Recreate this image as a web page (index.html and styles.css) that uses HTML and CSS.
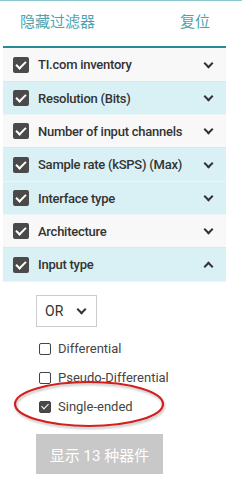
FILE: index.html
```html
<!DOCTYPE html>
<html lang="zh">
<head>
  <meta charset="UTF-8">
  <title>Filters</title>
  <link rel="stylesheet" href="styles.css">
</head>
<body>
  <div class="panel">
    <div class="head">
      <span class="link">隐藏过滤器</span>
      <span class="link reset">复位</span>
    </div>

    <div class="filters">
      <div class="row gray"><span class="box"></span><span class="name">TI.com inventory</span><span class="chev"></span></div>
      <div class="row blue"><span class="box"></span><span class="name">Resolution (Bits)</span><span class="chev"></span></div>
      <div class="row gray"><span class="box"></span><span class="name">Number of input channels</span><span class="chev"></span></div>
      <div class="row blue"><span class="box"></span><span class="name">Sample rate (kSPS) (Max)</span><span class="chev"></span></div>
      <div class="row blue"><span class="box"></span><span class="name">Interface type</span><span class="chev"></span></div>
      <div class="row gray"><span class="box"></span><span class="name">Architecture</span><span class="chev"></span></div>
      <div class="row blue"><span class="box"></span><span class="name">Input type</span><span class="chev up"></span></div>
    </div>

    <div class="options">
      <div class="select">OR<span class="chev small"></span></div>
      <label class="opt"><span class="tick"></span>Differential</label>
      <label class="opt"><span class="tick"></span>Pseudo-Differential</label>
      <label class="opt marked"><span class="tick on"></span>Single-ended
        <svg class="ring" width="156" height="52" viewBox="0 0 156 52">
          <ellipse cx="78" cy="26" rx="74" ry="22" fill="none" stroke="#d41f1f" stroke-width="2.2"/>
        </svg>
      </label>
      <button class="show">显示 13 种器件</button>
    </div>
  </div>
</body>
</html>
```

FILE: styles.css
```css
body {
  margin: 0;
  font-family: Roboto, "Noto Sans CJK SC", sans-serif;
  color: #333;
  background: #fff;
  border-top: 1px solid #8cc7cf;
}
.panel {
  width: 223px;
  margin-left: 3px;
}
.head {
  display: flex;
  justify-content: space-between;
  padding: 11px 16px 0 17px;
  height: 34px;
  border-bottom: 2px solid #2a8a98;
}
.link {
  font-size: 15px;
  color: #4ea3b2;
  line-height: 20px;
}
.row {
  display: flex;
  align-items: center;
  height: 32px;
  padding: 0 13px 0 10px;
  border-bottom: 1px solid #e4e4e4;
}
.row:nth-child(3n+1) {
  height: 33px;
}
.row.gray {
  background: #f8f8f8;
}
.row.blue {
  background: #d9f1f5;
  border-bottom-color: #e9f6f8;
}
.box {
  width: 16px;
  height: 16px;
  border-radius: 2px;
  background: #4a4a4a;
  position: relative;
  flex: none;
}
.box::after, .tick.on::after {
  content: "";
  position: absolute;
  left: 5px;
  top: 2px;
  width: 4px;
  height: 8px;
  border: solid #fff;
  border-width: 0 2px 2px 0;
  transform: rotate(45deg);
}
.name {
  flex: 1;
  margin-left: 9px;
  font-size: 13px;
  font-weight: 500;
  letter-spacing: -0.25px;
  color: #333;
}
.chev {
  width: 5px;
  height: 5px;
  border: solid #333;
  border-width: 0 2px 2px 0;
  transform: rotate(45deg);
  margin: -3px 1px 0 0;
}
.chev.up {
  transform: rotate(-135deg);
  margin-top: 3px;
}
.options {
  padding: 13px 0 0 33px;
}
.select {
  display: flex;
  justify-content: space-between;
  align-items: center;
  box-sizing: border-box;
  width: 61px;
  height: 32px;
  padding: 0 10px 0 8px;
  border: 1px solid #ccc;
  font-size: 14px;
  color: #333;
}
.opt {
  position: relative;
  display: flex;
  align-items: center;
  height: 29px;
  font-size: 13px;
  color: #444;
  margin-left: 3px;
}
.opt:first-of-type {
  margin-top: 7px;
}
.tick {
  position: relative;
  box-sizing: border-box;
  width: 12px;
  height: 12px;
  border: 1.5px solid #444;
  border-radius: 2px;
  margin-right: 7px;
  flex: none;
}
.tick.on {
  background: #4a4a4a;
}
.tick.on::after {
  left: 3px;
  top: 0;
  width: 3px;
  height: 6px;
  border-width: 0 1.5px 1.5px 0;
}
.ring {
  position: absolute;
  left: -28px;
  top: -14px;
  filter: drop-shadow(1px 2px 1px rgba(0,0,0,0.25));
}
.show {
  display: block;
  margin-top: 13px;
  width: 127px;
  height: 40px;
  border: none;
  background: #c8c8c8;
  color: #fff;
  font-family: Roboto, "Noto Sans CJK SC", sans-serif;
  font-size: 15px;
}
```
